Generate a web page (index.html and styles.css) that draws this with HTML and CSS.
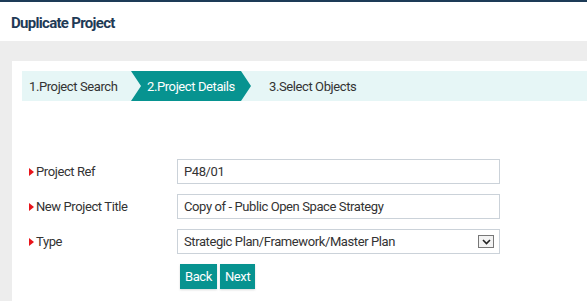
FILE: index.html
```html
<!DOCTYPE html>
<html lang="en">
<head>
    <meta charset="UTF-8">
    <title>Duplicate Project</title>
    <link rel="stylesheet" href="styles.css">
</head>
<body>
    <div class="page-header">
        <h1>Duplicate Project</h1>
    </div>

    <div class="main">
        <div class="panel">
            <div class="steps">
                <div class="step step-done">1.Project Search</div>
                <div class="step step-active">2.Project Details</div>
                <div class="step step-next">3.Select Objects</div>
            </div>

            <form class="dup-form">
                <div class="form-row">
                    <label class="req">Project Ref</label>
                    <input type="text" class="field" value="P48/01">
                </div>
                <div class="form-row">
                    <label class="req">New Project Title</label>
                    <input type="text" class="field" value="Copy of - Public Open Space Strategy">
                </div>
                <div class="form-row">
                    <label class="req">Type</label>
                    <div class="field select-field">
                        <span>Strategic Plan/Framework/Master Plan</span>
                        <span class="select-arrow">
                            <svg width="9" height="6" viewBox="0 0 9 6"><path d="M1 1 L4.5 4.5 L8 1" fill="none" stroke="#222" stroke-width="1.6"/></svg>
                        </span>
                    </div>
                </div>
                <div class="form-actions">
                    <button type="button" class="btn">Back</button>
                    <button type="button" class="btn">Next</button>
                </div>
            </form>
        </div>
    </div>
</body>
</html>
```

FILE: styles.css
```css
body {
    margin: 0;
    font-family: 'Roboto', 'Liberation Sans', sans-serif;
    background-color: #ededed;
    color: #333;
    height: 301px;
    display: flex;
    flex-direction: column;
    letter-spacing: -0.4px;
}

.page-header {
    background-color: white;
    border-top: 2px solid #1d3b57;
    height: 41px;
    box-sizing: border-box;
    padding-left: 11px;
}

.page-header h1 {
    margin: 0;
    padding-top: 12px;
    font-size: 15px;
    font-weight: bold;
    letter-spacing: -0.7px;
    color: #1f3a56;
}

.main {
    flex: 1;
    padding: 20px 0 0 12px;
    display: flex;
}

.panel {
    flex: 1;
    background-color: white;
    padding: 10px 0 0 10px;
}

.steps {
    display: flex;
    height: 30px;
    background-color: #e6f6f6;
    font-size: 13px;
}

.step {
    display: flex;
    align-items: center;
}

.step-done {
    width: 109px;
    padding-left: 7px;
    box-sizing: border-box;
}

.step-active {
    width: 120px;
    padding-left: 16px;
    box-sizing: border-box;
    background-color: #079390;
    color: white;
    clip-path: polygon(0 0, calc(100% - 10px) 0, 100% 50%, calc(100% - 10px) 100%, 0 100%, 10px 50%);
}

.step-next {
    padding-left: 18px;
}

.dup-form {
    padding: 58px 0 0 7px;
}

.form-row {
    display: flex;
    align-items: center;
    margin-bottom: 10px;
}

.form-row label {
    width: 148px;
    font-size: 13px;
    color: #333;
    display: flex;
    align-items: center;
}

.req::before {
    content: "";
    border-left: 5px solid #e8141b;
    border-top: 4px solid transparent;
    border-bottom: 4px solid transparent;
    margin-right: 2px;
}

.field {
    width: 323px;
    height: 25px;
    box-sizing: border-box;
    border: 1px solid #cbd2d9;
    padding: 0 6px;
    font-family: inherit;
    font-size: 13px;
    letter-spacing: -0.4px;
    color: #333;
    outline: none;
}

.select-field {
    display: flex;
    align-items: center;
    justify-content: space-between;
    padding-right: 5px;
}

.select-arrow {
    width: 16px;
    height: 13px;
    box-sizing: border-box;
    border: 1px solid #777;
    background-color: #f3f3f3;
    display: flex;
    align-items: center;
    justify-content: center;
}

.form-actions {
    display: flex;
    gap: 3px;
    padding-left: 151px;
}

.btn {
    height: 25px;
    padding: 0 5px;
    border: none;
    background-color: #079390;
    color: white;
    font-family: inherit;
    font-size: 13px;
    letter-spacing: -0.4px;
    box-shadow: 0 1px 2px rgba(0, 0, 0, 0.15);
    cursor: pointer;
}
```
